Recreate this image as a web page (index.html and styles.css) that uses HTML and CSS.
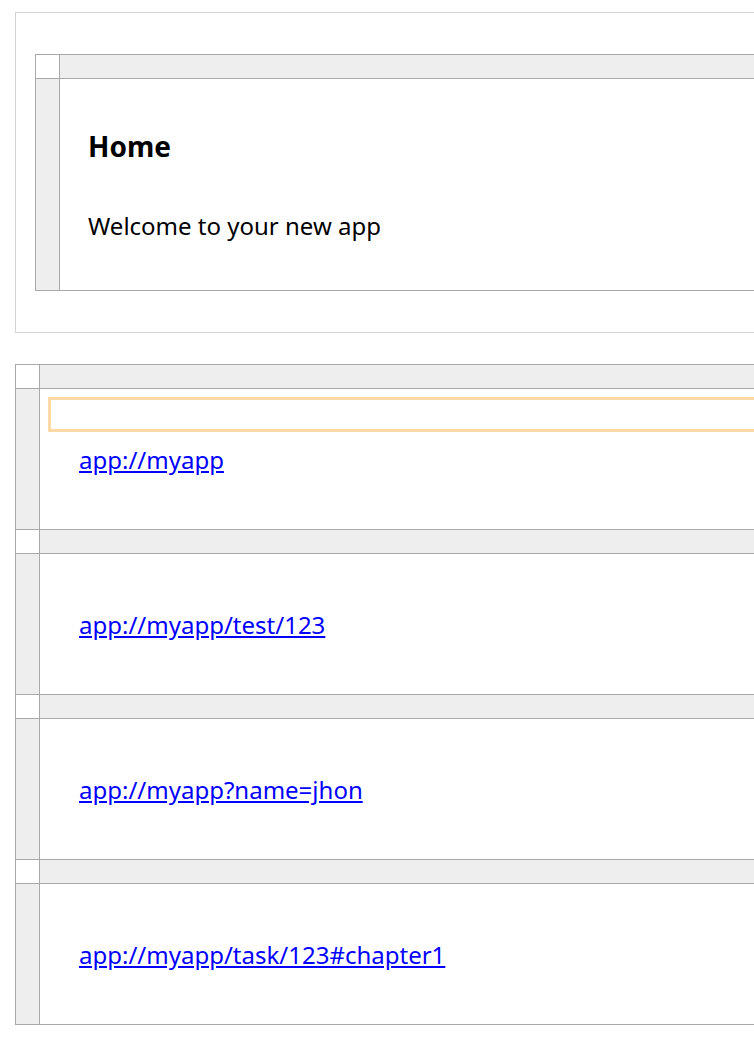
FILE: index.html
```html
<!DOCTYPE html>
<html lang="en">
<head>
<meta charset="utf-8">
<title>Home</title>
<link rel="stylesheet" href="styles.css">
</head>
<body>
<div class="page">
  <div class="shell">
    <div class="frame">
      <div class="pane">
        <div class="corner"></div>
        <div class="topbar"></div>
        <div class="sidebar"></div>
        <div class="content home">
          <div class="title">Home</div>
          <div class="welcome">Welcome to your new app</div>
        </div>
      </div>
    </div>
  </div>

  <div class="frame links">
    <div class="pane">
      <div class="corner"></div>
      <div class="topbar"></div>
      <div class="sidebar"></div>
      <div class="content linkcell">
        <div class="focus"></div>
        <a href="#">app://myapp</a>
      </div>
    </div>
    <div class="pane">
      <div class="corner"></div>
      <div class="topbar"></div>
      <div class="sidebar"></div>
      <div class="content linkcell"><a href="#">app://myapp/test/123</a></div>
    </div>
    <div class="pane">
      <div class="corner"></div>
      <div class="topbar"></div>
      <div class="sidebar"></div>
      <div class="content linkcell"><a href="#">app://myapp?name=jhon</a></div>
    </div>
    <div class="pane last">
      <div class="corner"></div>
      <div class="topbar"></div>
      <div class="sidebar"></div>
      <div class="content linkcell"><a href="#">app://myapp/task/123#chapter1</a></div>
    </div>
  </div>
</div>
</body>
</html>
```

FILE: styles.css
```css
html, body {
  margin: 0;
  padding: 0;
  background: #ffffff;
  overflow: hidden;
}

body {
  font-family: "Noto Sans", "Open Sans", sans-serif;
  font-size: 24px;
  color: #000000;
}

.page {
  padding: 12px 0 0 15px;
  width: 900px;
  display: flex;
  flex-direction: column;
  gap: 31px;
}

.shell {
  border: 1px solid #d3d3d3;
  padding: 41px 0 41px 19px;
}

.frame {
  border: 1px solid #a9a9a9;
  display: flex;
  flex-direction: column;
}

.pane {
  display: grid;
  grid-template-columns: 24px 1fr;
  grid-template-rows: 24px auto;
  border-bottom: 1px solid #a9a9a9;
}

.pane.last,
.shell .pane {
  border-bottom: none;
}

.corner {
  background: #ffffff;
  border-right: 1px solid #a9a9a9;
  border-bottom: 1px solid #a9a9a9;
}

.topbar {
  background: #eeeeee;
  border-bottom: 1px solid #a9a9a9;
}

.sidebar {
  background: #eeeeee;
  border-right: 1px solid #a9a9a9;
}

.content {
  background: #ffffff;
  position: relative;
}

.home {
  height: 211px;
  padding-left: 28px;
  box-sizing: border-box;
}

.title {
  font-weight: 700;
  font-size: 28px;
  line-height: 32px;
  margin-top: 51px;
}

.welcome {
  line-height: 32px;
  margin-top: 48px;
}

.linkcell {
  height: 140px;
  display: flex;
  align-items: center;
  padding-left: 39px;
}

.linkcell a {
  color: #0000ff;
  text-decoration: underline;
  line-height: 32px;
  position: relative;
  top: 1px;
}

.focus {
  position: absolute;
  left: 8px;
  top: 8px;
  right: 0;
  height: 35px;
  box-sizing: border-box;
  border: 3px solid #fdd9a6;
}
```
